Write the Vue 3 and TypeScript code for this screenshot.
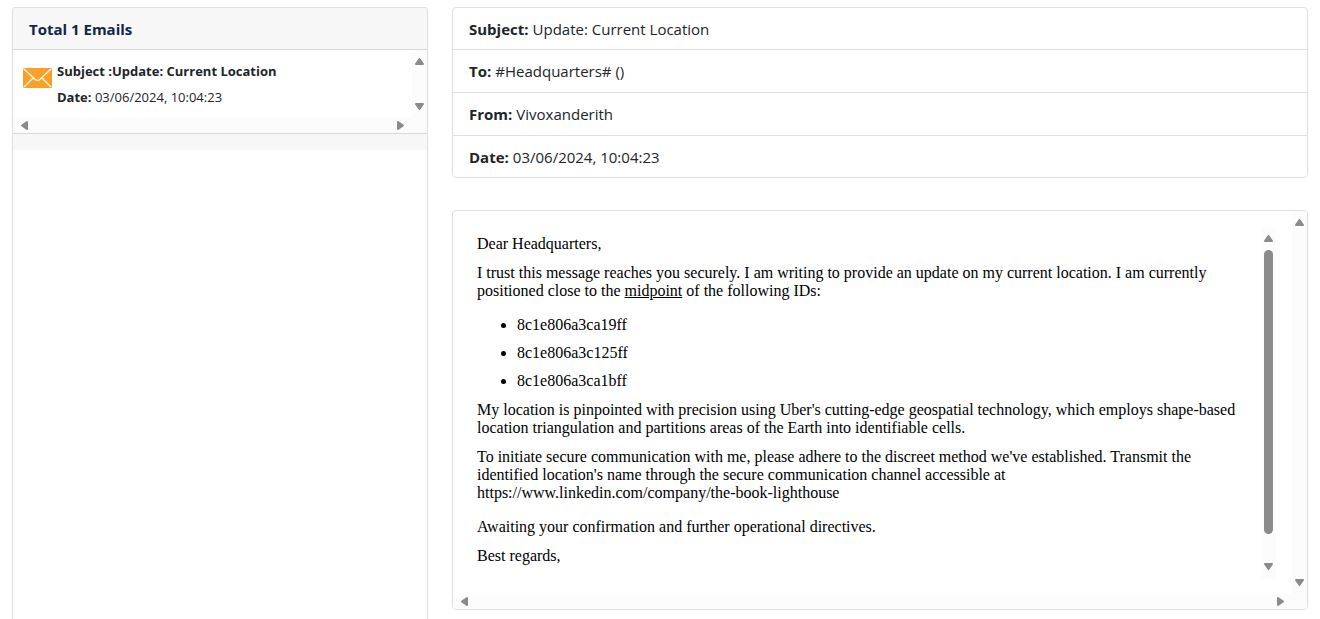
<script setup lang="ts">
interface Email {
  subject: string
  to: string
  from: string
  date: string
}

const email: Email = {
  subject: 'Update: Current Location',
  to: '#Headquarters# ()',
  from: 'Vivoxanderith',
  date: '03/06/2024, 10:04:23',
}

const fields = [
  { label: 'Subject:', value: email.subject },
  { label: 'To:', value: email.to },
  { label: 'From:', value: email.from },
  { label: 'Date:', value: email.date },
]

const ids = ['8c1e806a3ca19ff', '8c1e806a3c125ff', '8c1e806a3ca1bff']
</script>

<template>
  <main class="page">
    <aside class="inbox">
      <h1 class="inbox-head">Total 1 Emails</h1>
      <div class="scroller list">
        <button type="button" class="mail">
          <svg class="envelope" viewBox="0 0 29 20" aria-hidden="true">
            <rect width="29" height="20" rx="1.5" fill="#fa9f28" />
            <path d="M1 1 L12.3 11.6 Q14.5 13.4 16.7 11.6 L28 1 M1 19 L10.3 9.8 M28 19 L18.7 9.8" fill="none" stroke="#fff3df" stroke-width="1.4" />
          </svg>
          <span class="mail-text">
            <strong>Subject :{{ email.subject }}</strong>
            <span><strong>Date:</strong> {{ email.date }}</span>
          </span>
        </button>
        <div class="track vertical" aria-hidden="true">
          <svg viewBox="0 0 9 7" class="arrow-v"><path d="M4.5 1 L8 6 H1 Z" /></svg>
          <svg viewBox="0 0 9 7" class="arrow-v"><path d="M4.5 6 L8 1 H1 Z" /></svg>
        </div>
        <div class="track horizontal" aria-hidden="true">
          <svg viewBox="0 0 7 9" class="arrow-h"><path d="M1 4.5 L6 1 V8 Z" /></svg>
          <svg viewBox="0 0 7 9" class="arrow-h"><path d="M6 4.5 L1 1 V8 Z" /></svg>
        </div>
      </div>
      <div class="inbox-foot"></div>
    </aside>

    <section class="reader">
      <dl class="card fields">
        <div v-for="field in fields" :key="field.label" class="field">
          <dt>{{ field.label }}</dt>
          <dd>{{ field.value }}</dd>
        </div>
      </dl>

      <div class="card scroller">
        <div class="frame">
          <article class="letter">
            <p>Dear Headquarters,</p>
            <p>
              I trust this message reaches you securely. I am writing to provide an update on my current location. I am
              currently positioned close to the <u>midpoint</u> of the following IDs:
            </p>
            <ul>
              <li v-for="id in ids" :key="id">{{ id }}</li>
            </ul>
            <p>
              My location is pinpointed with precision using Uber's cutting-edge geospatial technology, which employs
              shape-based location triangulation and partitions areas of the Earth into identifiable cells.
            </p>
            <p>
              To initiate secure communication with me, please adhere to the discreet method we've established. Transmit
              the identified location's name through the secure communication channel accessible at
              https://www.linkedin.com/company/the-book-lighthouse
            </p>
            <p class="spaced">Awaiting your confirmation and further operational directives.</p>
            <p>Best regards,</p>
          </article>
          <div class="track vertical" aria-hidden="true">
            <svg viewBox="0 0 9 7" class="arrow-v"><path d="M4.5 1 L8 6 H1 Z" /></svg>
            <div class="rail"><div class="thumb"></div></div>
            <svg viewBox="0 0 9 7" class="arrow-v"><path d="M4.5 6 L8 1 H1 Z" /></svg>
          </div>
        </div>
        <div class="track vertical" aria-hidden="true">
          <svg viewBox="0 0 9 7" class="arrow-v"><path d="M4.5 1 L8 6 H1 Z" /></svg>
          <svg viewBox="0 0 9 7" class="arrow-v"><path d="M4.5 6 L8 1 H1 Z" /></svg>
        </div>
        <div class="track horizontal" aria-hidden="true">
          <svg viewBox="0 0 7 9" class="arrow-h"><path d="M1 4.5 L6 1 V8 Z" /></svg>
          <svg viewBox="0 0 7 9" class="arrow-h"><path d="M6 4.5 L1 1 V8 Z" /></svg>
        </div>
      </div>
    </section>
  </main>
</template>

<style>
body {
  margin: 0;
  background: #fff;
}
</style>

<style scoped>
* {
  box-sizing: border-box;
}

.page {
  display: grid;
  grid-template-columns: minmax(0, 1fr) minmax(0, 2fr);
  height: 100vh;
  overflow: hidden;
  padding-top: 7px;
  color: #212529;
  font-family: "Segoe UI", "Open Sans", "Noto Sans", sans-serif;
  font-size: 15px;
  line-height: 24px;
}

.inbox {
  margin: 0 12px;
  border: 1px solid #dfdfdf;
  border-bottom: 0;
  border-radius: 4px 4px 0 0;
  overflow: hidden;
}

.inbox-head {
  margin: 0;
  padding: 9px 16px 8px;
  border-bottom: 1px solid #d9d9d9;
  background: #f7f7f7;
  color: #12264d;
  font-size: 15px;
  font-weight: 700;
}

.inbox-foot {
  height: 17px;
  border-top: 1px solid #d9d9d9;
  background: #f7f7f7;
}

.scroller {
  display: grid;
  grid-template-columns: minmax(0, 1fr) 15px;
  grid-template-rows: auto 15px;
}

.mail {
  display: flex;
  align-items: flex-start;
  gap: 5px;
  padding: 8px 10px;
  border: 0;
  background: #fff;
  color: inherit;
  font: inherit;
  font-size: 13px;
  line-height: 26px;
  text-align: left;
  cursor: pointer;
}

.envelope {
  flex: none;
  width: 29px;
  height: 20px;
  margin-top: 10px;
}

.mail-text {
  display: flex;
  flex-direction: column;
}

.track {
  display: flex;
  align-items: center;
  justify-content: space-between;
  background: #fcfcfc;
}

.vertical {
  flex-direction: column;
  width: 15px;
  padding: 8px 0;
}

.horizontal {
  grid-column: 1 / -1;
  height: 15px;
  padding: 0 23px 0 8px;
}

.arrow-v,
.arrow-h {
  flex: none;
  display: block;
  fill: #8b8b8b;
  stroke: #8b8b8b;
  stroke-width: 2;
  stroke-linejoin: round;
}

.arrow-v {
  width: 9px;
  height: 7px;
}

.arrow-h {
  width: 7px;
  height: 9px;
}

.rail {
  flex: 1;
  width: 9px;
  margin: 8px 0;
}

.thumb {
  height: 93%;
  border-radius: 5px;
  background: #8b8b8b;
}

strong,
dt {
  font-weight: 700;
}

.reader {
  display: flex;
  flex-direction: column;
  gap: 32px;
  margin: 0 12px;
}

.card {
  border: 1px solid #dfdfdf;
  border-radius: 4px;
  overflow: hidden;
}

.fields {
  margin: 0;
}

.field {
  display: flex;
  gap: 4px;
  padding: 9px 16px;
}

.field:first-child,
.field:last-child {
  padding-bottom: 8px;
}

.field + .field {
  border-top: 1px solid #dfdfdf;
}

dd {
  margin: 0;
}

.frame {
  display: flex;
  padding: 16px;
}

.letter {
  flex: 1;
  min-width: 0;
  padding: 8px 8px 13px;
  color: #000;
  font-family: "Liberation Serif", "Times New Roman", serif;
  font-size: 16px;
  line-height: 18px;
}

.letter p {
  margin: 0 0 11px;
}

.letter p:last-child {
  margin: 0;
}

.letter .spaced {
  margin-top: 16px;
}

.letter ul {
  display: grid;
  gap: 10px;
  margin: 16px 0 11px;
  padding-left: 40px;
}
</style>
